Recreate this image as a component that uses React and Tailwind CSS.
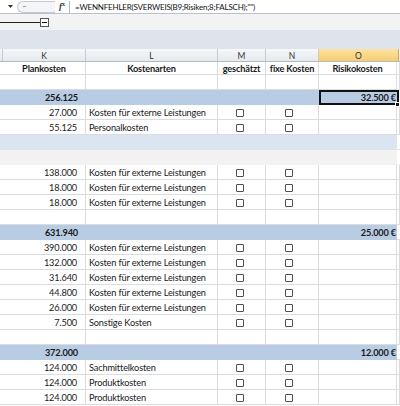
import React from "react";

const font = { fontFamily: "Lato, 'Open Sans', sans-serif" };

const rows = [
  { t: "blue", k: "256.125", o: "32.500 €", sel: true },
  { k: "27.000", l: "Kosten für externe Leistungen", cb: true },
  { k: "55.125", l: "Personalkosten", cb: true },
  { t: "lightblue" },
  { t: "gray" },
  { k: "138.000", l: "Kosten für externe Leistungen", cb: true },
  { k: "18.000", l: "Kosten für externe Leistungen", cb: true },
  { k: "18.000", l: "Kosten für externe Leistungen", cb: true },
  {},
  { t: "blue", k: "631.940", o: "25.000 €" },
  { k: "390.000", l: "Kosten für externe Leistungen", cb: true },
  { k: "132.000", l: "Kosten für externe Leistungen", cb: true },
  { k: "31.640", l: "Kosten für externe Leistungen", cb: true },
  { k: "44.800", l: "Kosten für externe Leistungen", cb: true },
  { k: "26.000", l: "Kosten für externe Leistungen", cb: true },
  { k: "7.500", l: "Sonstige Kosten", cb: true },
  {},
  { t: "blue", k: "372.000", o: "12.000 €" },
  { k: "124.000", l: "Sachmittelkosten", cb: true },
  { k: "124.000", l: "Produktkosten", cb: true },
  { k: "124.000", l: "Produktkosten", cb: true },
];

function Box() {
  return <div className="w-[8px] h-[8px] border-[1.5px] border-[#505050] rounded-[1px] bg-white" />;
}

const txt = "text-[9.2px] tracking-[-0.15px] text-[#1a1a1a]";

function Row({ r }) {
  if (r.t === "blue" || r.t === "lightblue" || r.t === "gray") {
    const bg =
      r.t === "blue" ? "bg-[#b8cce4]" : r.t === "lightblue" ? "bg-[#dbe5f1]" : "bg-[#f2f2f2]";
    return (
      <div className="flex h-[15px] shrink-0">
        <div className={`flex ${bg} w-[397px] h-full`}>
          <div className="w-[3px]" />
          <div className={`w-[83px] flex items-center justify-end pr-[8px] pt-[1px] font-bold ${txt}`}>
            {r.k}
          </div>
          <div className="w-[233px]" />
          <div className="relative w-[78px] h-full">
            {r.sel && (
              <div className="absolute left-0 top-0 w-[80px] h-[15px] border-2 border-[#111]" />
            )}
            <div className={`flex h-full items-center justify-end pr-[1px] pt-[1px] font-bold ${txt}`}>
              {r.o}
            </div>
            {r.sel && (
              <div className="absolute left-[76px] top-[12px] w-[5px] h-[5px] bg-[#111] border border-white" />
            )}
          </div>
        </div>
        <div className={`flex-1 border-b ${r.t === "gray" ? "border-[#f2f2f2]" : "border-[#dadcdd]"}`} />
      </div>
    );
  }
  const c = `h-full border-r border-b border-[#dadcdd] flex items-center pt-[1px] ${txt}`;
  return (
    <div className="flex h-[15px] shrink-0">
      <div className="h-full w-[3px] border-b border-[#dadcdd]" />
      <div className={`${c} w-[83px] justify-end pr-[8px]`}>{r.k}</div>
      <div className={`${c} w-[132px] pl-[3px] whitespace-nowrap`}>{r.l}</div>
      <div className={`${c} w-[48px] justify-center pr-[3px]`}>{r.cb && <Box />}</div>
      <div className={`${c} w-[53px] justify-center pr-[6px]`}>{r.cb && <Box />}</div>
      <div className={`${c} w-[78px]`} />
      <div className={`${c} flex-1`} />
    </div>
  );
}

export default function App() {
  const hc = "h-full border-r border-[#c6cbd2] flex items-center justify-center pt-[2px] text-[8.5px] text-[#333]";
  const h2 = "h-full border-r border-b border-[#dadcdd] flex items-center justify-center pt-[2px] font-bold text-[9.2px] tracking-[-0.15px] text-[#1a1a1a] whitespace-nowrap";
  const e = "h-full border-r border-b border-[#dadcdd]";
  return (
    <div className="w-[400px] h-[406px] overflow-hidden bg-white flex flex-col" style={font}>
      {/* formula bar */}
      <div className="flex items-center h-[14px] shrink-0 border-b border-[#b9c1cc] bg-white">
        <div className="w-[16px] flex justify-end pr-[3px]">
          <svg width="5" height="3" viewBox="0 0 5 3"><path d="M0 0h5L2.5 3z" fill="#333" /></svg>
        </div>
        <div className="w-[38px] h-[12px] ml-[1px] rounded-l-full border border-r-0 border-[#c4c9cf] bg-[#f4f5f7] flex items-center pl-[5px]">
          <div className="w-[3px] h-[1px] bg-[#9aa0a8]" />
        </div>
        <div className="w-[14px] flex justify-center italic font-bold text-[9px] text-[#333]" style={{ fontFamily: "'Liberation Serif', serif" }}>
          f<span className="text-[6px] not-italic">x</span>
        </div>
        <div className="w-[1px] h-[12px] bg-[#b0b6bd]" />
        <div className="pl-[5px] pt-[1px] text-[8px] tracking-[-0.2px] text-[#111] whitespace-nowrap">
          =WENNFEHLER(SVERWEIS(B9;Risiken;8;FALSCH);"")
        </div>
      </div>
      {/* outline area */}
      <div className="h-[16px] shrink-0 bg-[#f3f3f3] flex items-center">
        <div className="w-[40px] h-[1px] bg-[#222]" />
        <div className="w-[9px] h-[9px] border border-[#555] bg-white flex items-center justify-center">
          <div className="w-[5px] h-[1px] bg-[#111]" />
        </div>
      </div>
      <div className="h-[19px] shrink-0 bg-[#dee4eb]" />
      {/* column letters */}
      <div className="flex h-[13px] shrink-0 bg-gradient-to-b from-[#f5f7f9] to-[#e6e9ee] border-b border-[#b3bac3]">
        <div className={`${hc} w-[3px]`} />
        <div className={`${hc} w-[83px]`}>K</div>
        <div className={`${hc} w-[132px]`}>L</div>
        <div className={`${hc} w-[48px]`}>M</div>
        <div className={`${hc} w-[53px]`}>N</div>
        <div className="h-full w-[80px] flex items-center justify-center pt-[2px] text-[8.5px] text-[#333] bg-gradient-to-b from-[#fbe3a4] to-[#f6cd6c] border-r border-[#d6ab4a]">O</div>
        <div className="flex-1" />
      </div>
      {/* header labels */}
      <div className="flex h-[13px] shrink-0">
        <div className="h-full w-[3px] border-b border-[#dadcdd]" />
        <div className={`${h2} w-[83px]`}>Plankosten</div>
        <div className={`${h2} w-[132px]`}>Kostenarten</div>
        <div className={`${h2} w-[48px]`}>geschätzt</div>
        <div className={`${h2} w-[53px]`}>fixe Kosten</div>
        <div className={`${h2} w-[78px]`}>Risikokosten</div>
        <div className={`${e} flex-1`} />
      </div>
      <div className="flex h-[15px] shrink-0">
        <div className="h-full w-[3px] border-b border-[#dadcdd]" />
        <div className={`${e} w-[83px]`} />
        <div className={`${e} w-[132px]`} />
        <div className={`${e} w-[48px]`} />
        <div className={`${e} w-[53px]`} />
        <div className={`${e} w-[78px]`} />
        <div className={`${e} flex-1`} />
      </div>
      {rows.map((r, i) => (
        <Row key={i} r={r} />
      ))}
    </div>
  );
}
